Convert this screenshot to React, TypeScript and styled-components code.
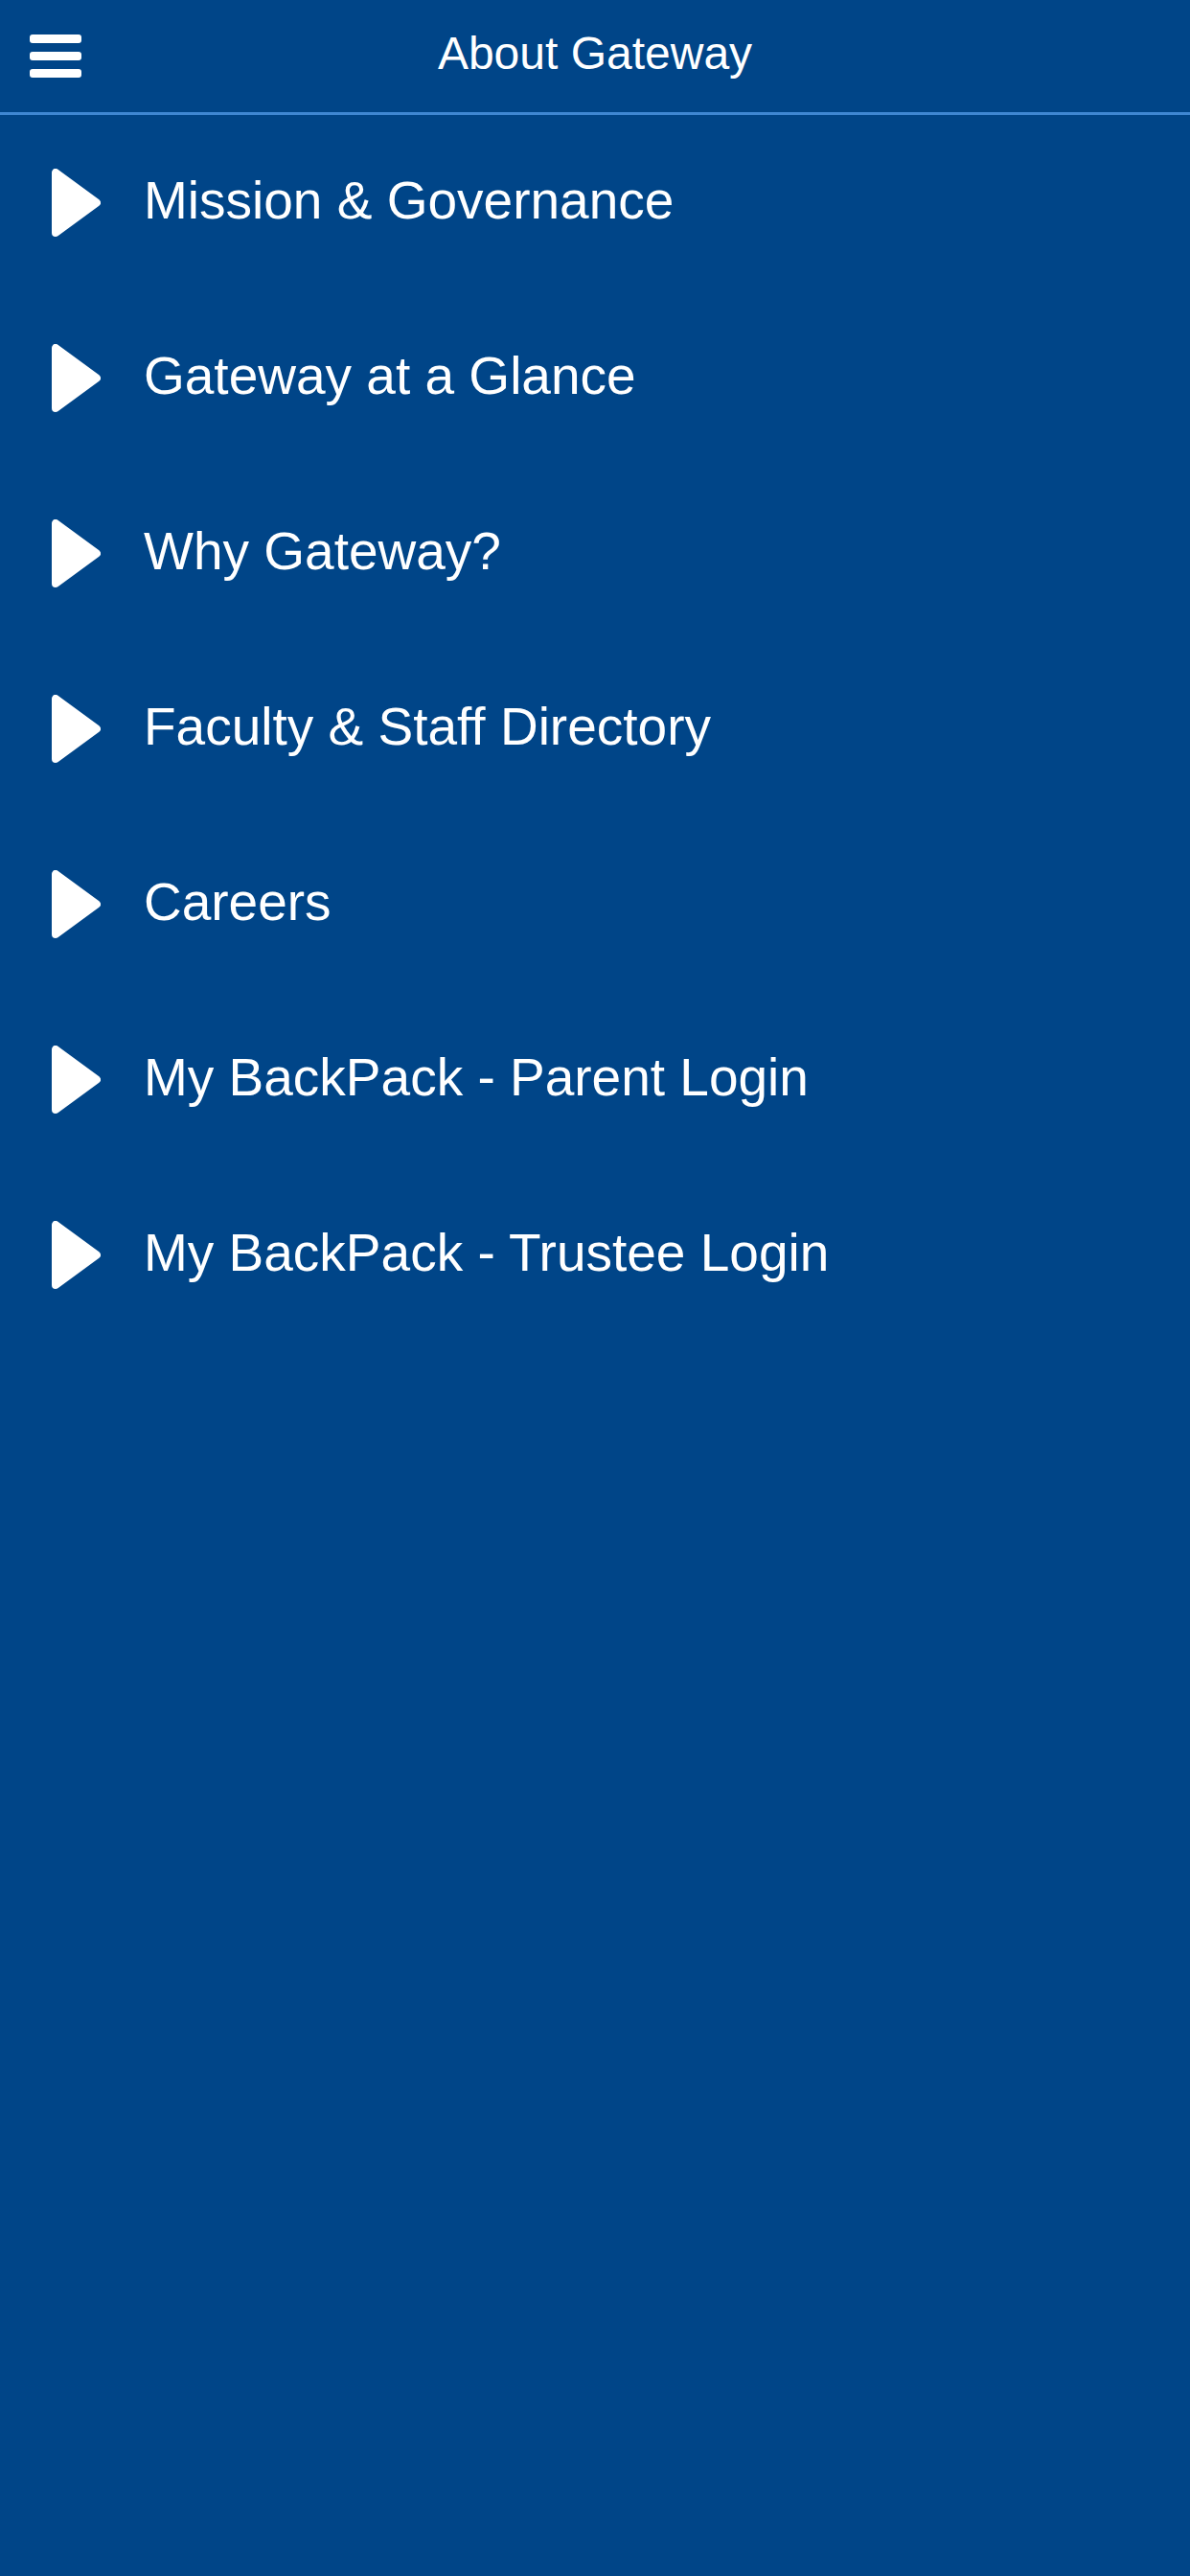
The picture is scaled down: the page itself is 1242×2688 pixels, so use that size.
import React from "react";
import styled, { createGlobalStyle } from "styled-components";

const GlobalStyle = createGlobalStyle`
  html, body, #root {
    margin: 0;
    padding: 0;
    min-height: 100%;
    height: 100%;
  }
  body {
    background: #004588;
    font-family: "Liberation Sans", Arial, Helvetica, sans-serif;
    color: #ffffff;
  }
`;

const Screen = styled.div`
  min-height: 100vh;
  background: #004588;
  display: flex;
  flex-direction: column;
`;

const Header = styled.header`
  height: 117px;
  display: grid;
  grid-template-columns: 1fr auto 1fr;
  align-items: center;
  border-bottom: 3px solid #3f87d2;
`;

const MenuButton = styled.button`
  justify-self: start;
  margin-left: 31px;
  padding: 0;
  border: 0;
  background: transparent;
  display: flex;
  flex-direction: column;
  gap: 9px;
  cursor: pointer;
`;

const Bar = styled.span`
  display: block;
  width: 54px;
  height: 9px;
  border-radius: 3px;
  background: #ffffff;
`;

const Title = styled.h1`
  margin: 0 0 6px;
  font-size: 48px;
  font-weight: 400;
  line-height: normal;
  color: #ffffff;
  white-space: nowrap;
`;

const List = styled.ul`
  list-style: none;
  margin: 0;
  padding: 0;
`;

const Row = styled.li`
  height: 183px;
  display: flex;
  align-items: center;
  padding-left: 54px;
  gap: 45px;
  cursor: pointer;
`;

const Label = styled.span`
  font-size: 55px;
  line-height: normal;
  margin-bottom: 5px;
  white-space: nowrap;
`;

const ArrowIcon = () => (
  <svg width="51" height="71" viewBox="0 0 51 71" aria-hidden="true">
    <polygon
      points="4,4 4,67 47,35.5"
      fill="#ffffff"
      stroke="#ffffff"
      strokeWidth="8"
      strokeLinejoin="round"
    />
  </svg>
);

const items = [
  "Mission & Governance",
  "Gateway at a Glance",
  "Why Gateway?",
  "Faculty & Staff Directory",
  "Careers",
  "My BackPack - Parent Login",
  "My BackPack - Trustee Login",
];

export default function App() {
  return (
    <>
      <GlobalStyle />
      <Screen>
        <Header>
          <MenuButton aria-label="Menu">
            <Bar />
            <Bar />
            <Bar />
          </MenuButton>
          <Title>About Gateway</Title>
          <span />
        </Header>
        <List>
          {items.map((item) => (
            <Row key={item}>
              <ArrowIcon />
              <Label>{item}</Label>
            </Row>
          ))}
        </List>
      </Screen>
    </>
  );
}
